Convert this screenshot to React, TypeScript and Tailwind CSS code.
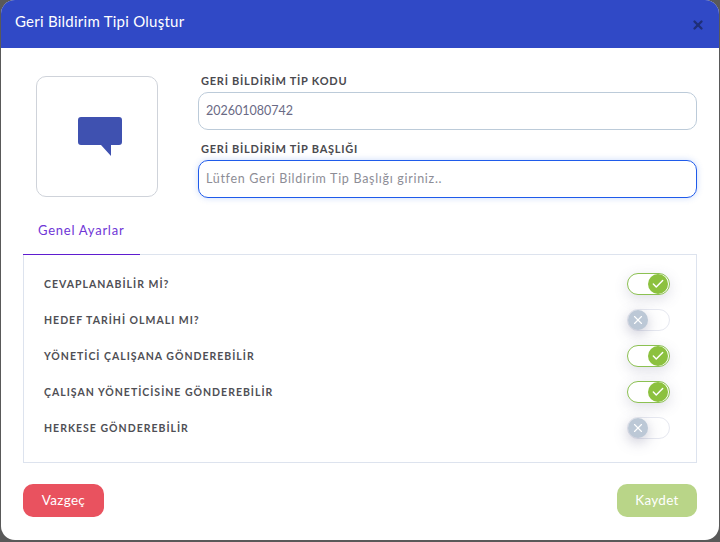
import { Check, X } from 'lucide-react';

const settings = [
  { label: 'CEVAPLANABİLİR Mİ?', on: true },
  { label: 'HEDEF TARİHİ OLMALI MI?', on: false },
  { label: 'YÖNETİCİ ÇALIŞANA GÖNDEREBİLİR', on: true },
  { label: 'ÇALIŞAN YÖNETİCİSİNE GÖNDEREBİLİR', on: true },
  { label: 'HERKESE GÖNDEREBİLİR', on: false },
];

function Toggle({ on }: { on: boolean }) {
  if (on) {
    return (
      <div className="relative w-[43px] h-[22px] rounded-full border border-[#8cc152] bg-white shadow-[0_4px_14px_rgba(90,90,130,0.2)]">
        <div className="absolute right-[1px] top-[0px] w-5 h-5 rounded-full bg-[#8cc13f] flex items-center justify-center">
          <Check className="text-white w-[14px] h-[14px]" strokeWidth={2.5} />
        </div>
      </div>
    );
  }
  return (
    <div className="relative w-[43px] h-[22px] rounded-full border border-[#e6e8f0] bg-white">
      <div className="absolute left-[0px] top-[0px] w-5 h-5 rounded-full bg-[#bcc8d6] flex items-center justify-center shadow-[0_4px_14px_rgba(90,90,130,0.35)]">
        <X className="text-white w-[14px] h-[14px]" strokeWidth={2} />
      </div>
    </div>
  );
}

export default function App() {
  return (
    <div className="w-[720px] h-[542px] bg-[#595959] overflow-hidden font-['Lato',sans-serif]">
      <div className="ml-[1px] w-[718px] h-[540px] bg-white rounded-[14px] overflow-hidden flex flex-col">
        <div className="h-[48px] bg-[#3049c6] flex justify-between pl-[14px] pr-[14px] pt-[14px] shrink-0">
          <h1 className="text-white text-[15px] font-normal tracking-[0.25px] leading-[15px]">Geri Bildirim Tipi Oluştur</h1>
          <X className="text-[#1f2f78] w-[14px] h-[14px] mt-[4px]" strokeWidth={4} />
        </div>

        <div className="flex-1 flex flex-col px-[22px]">
          <div className="flex pt-[26px] pl-[13px]">
            <div className="w-[122px] h-[121px] mt-[2px] shrink-0 border border-[#cfd3da] rounded-[10px] flex items-center justify-center">
              <svg width="44" height="39" viewBox="0 0 44 39" className="mt-[-1px] ml-[6px]">
                <path d="M3 0H41a3 3 0 0 1 3 3V25a3 3 0 0 1-3 3H33V39L23 28H3a3 3 0 0 1-3-3V3a3 3 0 0 1 3-3Z" fill="#3f51b0" />
              </svg>
            </div>
            <div className="flex-1 ml-[40px]">
              <label className="block ml-[3px] text-[11px] font-bold text-[#4a4a4f] tracking-[0.75px] leading-[14px]">GERİ BİLDİRİM TİP KODU</label>
              <div className="mt-[4px] h-[38px] border border-[#bccbd9] rounded-[10px] flex items-center pl-[7px] pt-[1px] text-[12.5px] text-[#6a6a85]">202601080742</div>
              <label className="block mt-[12px] ml-[3px] text-[11px] font-bold text-[#4a4a4f] tracking-[0.75px] leading-[14px]">GERİ BİLDİRİM TİP BAŞLIĞI</label>
              <div className="mt-[4px] h-[38px] border border-[#1f5bea] rounded-[10px] shadow-[0_0_6px_rgba(50,110,240,0.25)] flex items-center pl-[7px] text-[12.5px] text-[#8d8d96] tracking-[0.7px]">Lütfen Geri Bildirim Tip Başlığı giriniz..</div>
            </div>
          </div>

          <div className="mt-[10px] h-[47px] w-[117px] border-b border-[#5f1dd0] flex items-center pl-[15px] text-[13px] tracking-[0.75px] text-[#6f35d6] relative z-10">Genel Ayarlar</div>
          <div className="mt-[-1px] h-[209px] border border-[#dde3ee] pt-[11px] pl-[20px] pr-[26px] flex flex-col">
            {settings.map((s) => (
              <div key={s.label} className="h-[36px] flex items-center justify-between shrink-0">
                <span className="text-[10.5px] font-bold text-[#4f4f55] tracking-[1px] pt-[2px]">{s.label}</span>
                <Toggle on={s.on} />
              </div>
            ))}
          </div>

          <div className="mt-[21px] flex justify-between">
            <button className="w-[81px] h-[33px] rounded-[10px] bg-[#e9525f] text-white text-[13.5px] tracking-[0.3px]">Vazgeç</button>
            <button className="w-[80px] h-[33px] rounded-[10px] bg-[#b9d588] text-white text-[13.5px] tracking-[0.3px]">Kaydet</button>
          </div>
        </div>
      </div>
    </div>
  );
}
